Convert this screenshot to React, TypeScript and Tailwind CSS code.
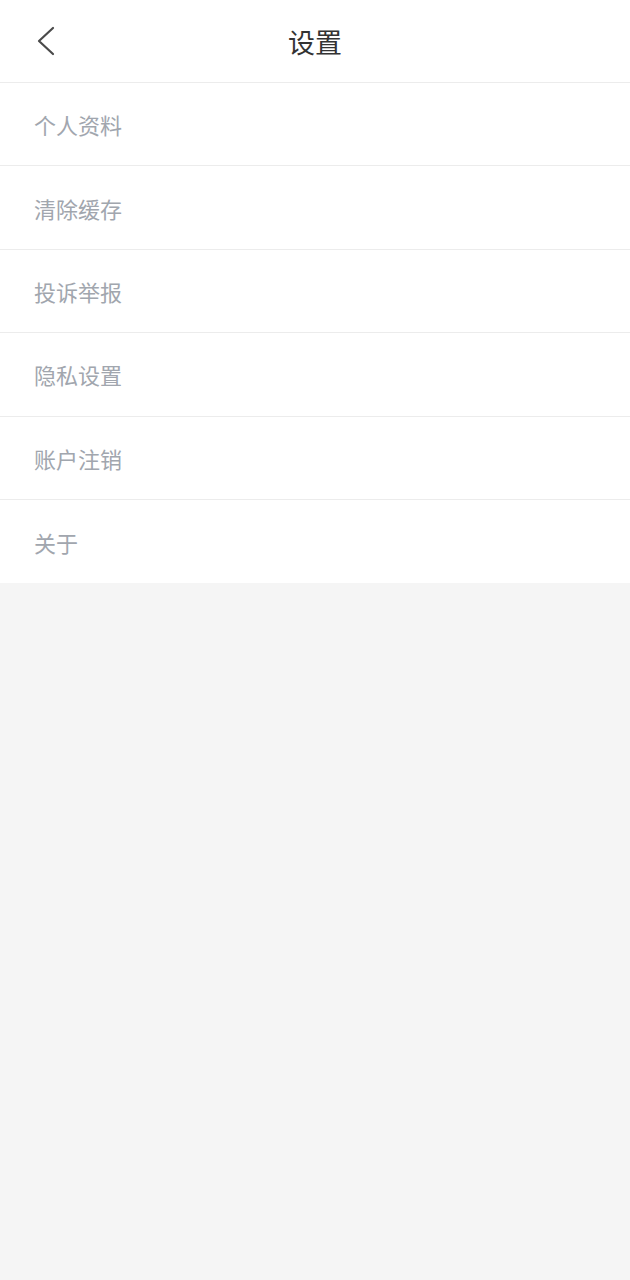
const ITEMS = ['个人资料', '清除缓存', '投诉举报', '隐私设置', '账户注销', '关于'];

export default function App() {
  return (
    <div
      className="flex min-h-[1280px] w-full flex-col bg-[#f5f5f5]"
      style={{ fontFamily: '"Noto Sans CJK SC", "Noto Sans", sans-serif' }}
    >
      {/* Header */}
      <div className="relative flex h-[83px] items-center justify-center border-b border-[#ececec] bg-white">
        <button type="button" className="absolute left-[30px] top-[18px] p-1" aria-label="Back">
          <svg width="26" height="36" viewBox="0 0 26 36" fill="none">
            <path d="M19 6 L5 19 L19 32" stroke="#4a4a4a" strokeWidth="2.2" strokeLinecap="round" strokeLinejoin="round" />
          </svg>
        </button>
        <h1 className="text-[27px] leading-none text-[#333333]">设置</h1>
      </div>

      {/* List */}
      <div className="flex flex-col bg-white">
        {ITEMS.map((item, i) => (
          <div
            key={item}
            className={
              'flex h-[83.4px] items-center px-[34px] ' + (i < ITEMS.length - 1 ? 'border-b border-[#ececec]' : '')
            }
          >
            <span className="text-[22px] leading-none text-[#a1a6ae]">{item}</span>
          </div>
        ))}
      </div>
    </div>
  );
}
